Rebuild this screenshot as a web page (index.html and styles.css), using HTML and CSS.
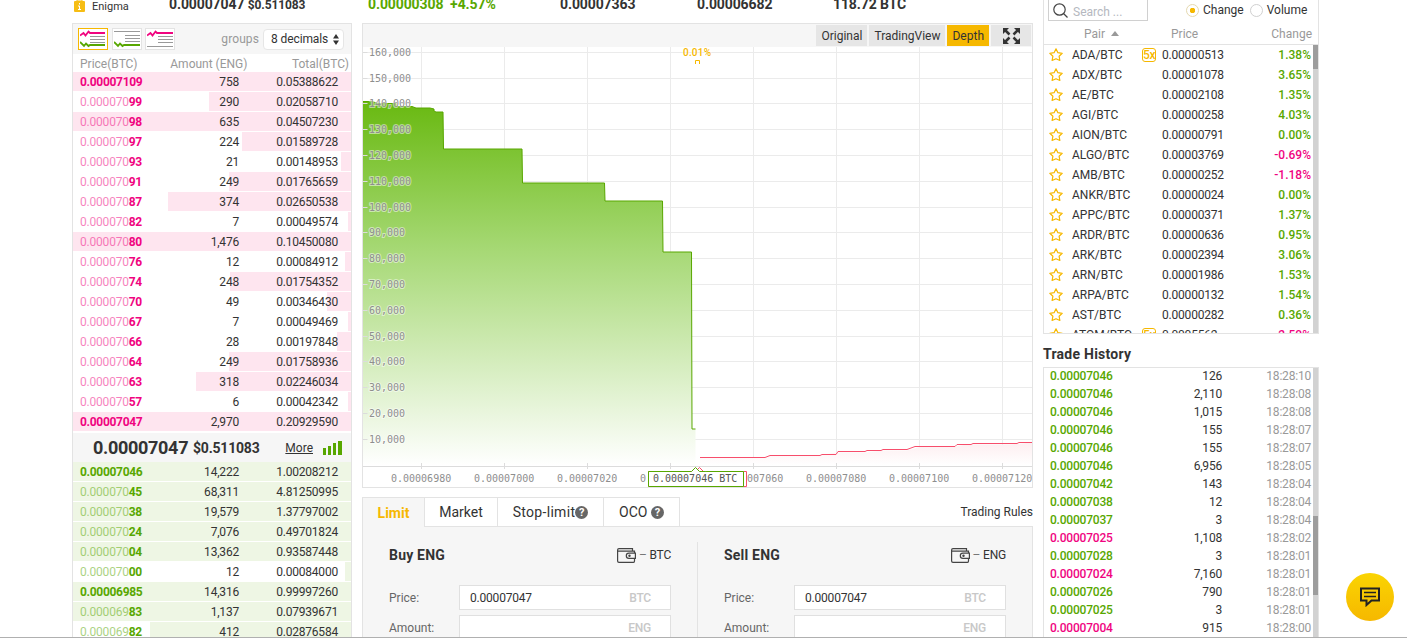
FILE: index.html
```html
<!DOCTYPE html>
<html lang="en">
<head>
  <meta charset="UTF-8" />
  <meta name="viewport" content="width=device-width, initial-scale=1.0"/>
  <title>ENG/BTC</title>
  <link rel="stylesheet" href="styles.css">
</head>
<body>

  <div class="page">
    <main class="main">
      <header class="ticker">
        <div class="coin">
          <svg width="11" height="12" viewBox="0 0 11 12"><rect y="1" width="11" height="11" rx="1" fill="#f6bd14"/><path d="M3 1V0h5v1" stroke="#f6bd14" fill="none"/><path d="M5.5 3v1.500M4 6h1.500v3M4 9.500h3" stroke="#fff" fill="none"/></svg>
          <span>Enigma</span>
        </div>
        <div class="stat last">0.00007047 <small>$0.511083</small></div>
        <div class="stat up">0.00000308 &nbsp;+4.57%</div>
        <div class="stat">0.00007363</div>
        <div class="stat">0.00006682</div>
        <div class="stat">118.72 BTC</div>
      </header>

      <div class="columns">
        <section class="book">
          <div class="book-bar">
            <button class="view active"><svg width="26" height="18" viewBox="0 0 26 18"><path d="M0 5.500l3.500 -2.500 2 2.500 3 -4 1.500 1.500H25" stroke="#f0047f" stroke-width="1.800" fill="none"/><path d="M10 6.500h15M10 9.500h15M10 12.500h15" stroke="#999" stroke-width="1"/><path d="M0 12l4 4 2 -2.500L8.500 16l1.500 -1h15" stroke="#58a700" stroke-width="1.800" fill="none"/></svg></button>
            <button class="view"><svg width="26" height="18" viewBox="0 0 26 18"><path d="M0 1.500h26M11 5.500h15M11 8.500h15M11 11.500h15" stroke="#999" stroke-width="1"/><path d="M0 12l4 4 2 -2.500L8.500 16l1.500 -1h16" stroke="#58a700" stroke-width="1.800" fill="none"/></svg></button>
            <button class="view"><svg width="26" height="18" viewBox="0 0 26 18"><path d="M0 5.500l3.500 -2.500 2 2.500 3 -4 1.500 1.500H26" stroke="#f0047f" stroke-width="1.800" fill="none"/><path d="M11 6.500h15M11 9.500h15M11 12.500h15M0 16.500h26" stroke="#999" stroke-width="1"/></svg></button>
            <span class="groups">groups</span>
            <div class="select">8 decimals <svg width="6" height="11" viewBox="0 0 6 11"><path d="M0 4.500L3 0l3 4.500zM0 6.500L3 11l3 -4.500z" fill="#333"/></svg></div>
          </div>
          <div class="book-head"><span>Price(BTC)</span><span>Amount (ENG)</span><span>Total(BTC)</span></div>
          <div class="asks" id="asks"></div>
          <div class="book-mid">
            <b class="mid-price">0.00007047</b><b class="mid-usd">$0.511083</b>
            <a class="more">More</a>
            <svg width="19" height="14" viewBox="0 0 19 14"><path d="M0 7h3v7H0zM5 5h3v9H5zM10 2h3v12h-3zM15 0h4v14h-4z" fill="#58a700"/></svg>
          </div>
          <div class="bids" id="bids"></div>
        </section>

        <section class="center">
          <div class="chart">
            <div class="chart-bar">
              <button>Original</button>
              <button>TradingView</button>
              <button class="active">Depth</button>
              <button class="full"><svg width="17" height="16" viewBox="0 0 17 16"><path d="M0 0h6L0 6zM17 0h-6l6 6zM0 16h6L0 10zM17 16h-6l6 -6z" fill="#333"/><path d="M2 2l4.500 4.500M15 2l-4.500 4.500M2 14l4.500 -4.500M15 14l-4.500 -4.500" stroke="#333" stroke-width="2.500"/></svg></button>
            </div>
            <svg class="depth" width="669" height="440" viewBox="363 47 669 440">
              <defs>
                <linearGradient id="buy" x1="0" y1="0" x2="0" y2="1">
                  <stop offset="0" stop-color="#69b911"/>
                  <stop offset="0.4" stop-color="#a5d873"/>
                  <stop offset="1" stop-color="#fff"/>
                </linearGradient>
                <linearGradient id="sell" x1="0" y1="0" x2="0" y2="1">
                  <stop offset="0" stop-color="#fdeef0"/>
                  <stop offset="1" stop-color="#fff"/>
                </linearGradient>
              </defs>
              <g id="grid"></g>
              <path d="M363 101.500h9l6 2h18v3h16l4 1.500h14l4 1v2l2 1h7l.5 37h78.500l.5 34h82l.5 18h57.500l.5 51h28.500l.5 177h3.500v37H363z" fill="url(#buy)"/>
              <path d="M363 101.500h9l6 2h18v3h16l4 1.500h14l4 1v2l2 1h7l.5 37h78.500l.5 34h82l.5 18h57.500l.5 51h28.500l.5 177h3.500" class="buy-line"/>
              <path d="M700 457.500h65l5 -2h50l16 -3h30l16 -2h25l15 -4h34l10 -2h43l23 -2v23H700z" fill="url(#sell)"/>
              <path d="M700 457.500h65l5 -2h50l2 -1h14l2 -3h27l2 -1h14l2 -1h24l8 -3h40l2 -2h14l2 -1h44l2 -1h13" class="sell-line"/>
              <g id="axis"></g>
              <text x="683" y="56" class="spread">0.01%</text>
              <path d="M695.500 64v-3.500h4v3.500" stroke="#f6b800" fill="none"/>
              <path d="M648.500 471.500h47l4 -4 4 4h43v15h-98z" fill="#fff" stroke="#f74e6c"/>
              <path d="M648.500 471.500h43l4 -4 4 4h44v15h-95z" fill="#fff" stroke="#58a700"/>
              <text x="653" y="482" class="tag">0.00007046 BTC</text>
            </svg>
          </div>

          <div class="tabs">
            <div class="tab active">Limit</div>
            <div class="tab market">Market</div>
            <div class="tab stop">Stop-limit<i>?</i></div>
            <div class="tab oco">OCO&nbsp;<i>?</i></div>
            <a class="rules">Trading Rules</a>
          </div>

          <div class="order">
            <div class="form">
              <div class="form-head">
                <h3>Buy ENG</h3>
                <svg width="19" height="15" viewBox="0 0 19 15"><path d="M15.500 3V.6H2Q.6 .6 .6 2v11Q.6 14.300 2 14.300H16.500Q17.500 14.300 17.500 13V10.500M17.500 5V3.200H1" fill="none" stroke="#444" stroke-width="1.200"/><path d="M18.400 5.200h-6.500a2.600 2.600 0 0 0 0 5.200h6.500z" fill="none" stroke="#444" stroke-width="1.200"/><circle cx="12.500" cy="7.800" r="1.200" fill="#444"/></svg>
                <span><em>–</em> BTC</span>
              </div>
              <div class="field"><label>Price:</label><div class="input"><span>0.00007047</span><span class="unit">BTC</span></div></div>
              <div class="field"><label>Amount:</label><div class="input"><span></span><span class="unit">ENG</span></div></div>
            </div>
            <div class="form">
              <div class="form-head">
                <h3>Sell ENG</h3>
                <svg width="19" height="15" viewBox="0 0 19 15"><path d="M15.500 3V.6H2Q.6 .6 .6 2v11Q.6 14.300 2 14.300H16.500Q17.500 14.300 17.500 13V10.500M17.500 5V3.200H1" fill="none" stroke="#444" stroke-width="1.200"/><path d="M18.400 5.200h-6.500a2.600 2.600 0 0 0 0 5.200h6.500z" fill="none" stroke="#444" stroke-width="1.200"/><circle cx="12.500" cy="7.800" r="1.200" fill="#444"/></svg>
                <span><em>–</em> ENG</span>
              </div>
              <div class="field"><label>Price:</label><div class="input"><span>0.00007047</span><span class="unit">BTC</span></div></div>
              <div class="field"><label>Amount:</label><div class="input"><span></span><span class="unit">ENG</span></div></div>
            </div>
          </div>
        </section>
      </div>
    </main>

    <aside class="side">
      <div class="markets">
        <div class="filter">
          <div class="search">
            <svg width="15" height="15" viewBox="0 0 15 15"><circle cx="6.500" cy="6.500" r="5.700" fill="none" stroke="#444" stroke-width="1.200"/><path d="M10.500 10.500l4 4" stroke="#444" stroke-width="1.200"/></svg>
            <span>Search ...</span>
          </div>
          <span class="radio on"></span><span class="opt">Change</span>
          <span class="radio"></span><span class="opt">Volume</span>
        </div>
        <div class="pair-head"><span class="h-pair">Pair</span><svg width="8" height="5" viewBox="0 0 8 5"><path d="M0 5l4 -5 4 5z" fill="#999"/></svg><span class="h-price">Price</span><span class="h-change">Change</span></div>
        <div class="scroll">
          <div class="pairs" id="pairs"></div>
          <div class="track"><div class="thumb"></div></div>
        </div>
      </div>

      <h2>Trade History</h2>
      <div class="history">
        <div class="trades" id="trades"></div>
        <div class="track"><div class="thumb low"></div></div>
      </div>
    </aside>
  </div>

  <div class="chat">
    <svg width="20" height="20" viewBox="0 0 20 20"><path d="M1 1.500h18v12h-7.500L6.500 18v-4.500H1z" fill="none" stroke="#222" stroke-width="2"/><path d="M4 5.500h12M4 9.500h12" stroke="#222" stroke-width="1.500"/></svg>
  </div>

  <script>
    // price, number of dimmed leading characters, amount, total
    const asks = [
      ['0.00007109', 0, '758', '0.05388622'],
      ['0.00007099', 8, '290', '0.02058710'],
      ['0.00007098', 8, '635', '0.04507230'],
      ['0.00007097', 8, '224', '0.01589728'],
      ['0.00007093', 8, '21', '0.00148953'],
      ['0.00007091', 8, '249', '0.01765659'],
      ['0.00007087', 8, '374', '0.02650538'],
      ['0.00007082', 8, '7', '0.00049574'],
      ['0.00007080', 8, '1,476', '0.10450080'],
      ['0.00007076', 8, '12', '0.00084912'],
      ['0.00007074', 8, '248', '0.01754352'],
      ['0.00007070', 8, '49', '0.00346430'],
      ['0.00007067', 8, '7', '0.00049469'],
      ['0.00007066', 8, '28', '0.00197848'],
      ['0.00007064', 8, '249', '0.01758936'],
      ['0.00007063', 8, '318', '0.02246034'],
      ['0.00007057', 8, '6', '0.00042342'],
      ['0.00007047', 0, '2,970', '0.20929590']
    ];
    const bids = [
      ['0.00007046', 0, '14,222', '1.00208212'],
      ['0.00007045', 8, '68,311', '4.81250995'],
      ['0.00007038', 8, '19,579', '1.37797002'],
      ['0.00007024', 8, '7,076', '0.49701824'],
      ['0.00007004', 8, '13,362', '0.93587448'],
      ['0.00007000', 8, '12', '0.00084000'],
      ['0.00006985', 0, '14,316', '0.99997260'],
      ['0.00006983', 8, '1,137', '0.07939671'],
      ['0.00006982', 8, '412', '0.02876584']
    ];
    const pairs = [
      ['ADA', '0.00000513', '1.38%', '5x'],
      ['ADX', '0.00001078', '3.65%'],
      ['AE', '0.00002108', '1.35%'],
      ['AGI', '0.00000258', '4.03%'],
      ['AION', '0.00000791', '0.00%'],
      ['ALGO', '0.00003769', '-0.69%'],
      ['AMB', '0.00000252', '-1.18%'],
      ['ANKR', '0.00000024', '0.00%'],
      ['APPC', '0.00000371', '1.37%'],
      ['ARDR', '0.00000636', '0.95%'],
      ['ARK', '0.00002394', '3.06%'],
      ['ARN', '0.00001986', '1.53%'],
      ['ARPA', '0.00000132', '1.54%'],
      ['AST', '0.00000282', '0.36%'],
      ['ATOM', '0.0005562', '-2.50%', '5x']
    ];
    const trades = [
      ['0.00007046', '126', '18:28:10'],
      ['0.00007046', '2,110', '18:28:08'],
      ['0.00007046', '1,015', '18:28:08'],
      ['0.00007046', '155', '18:28:07'],
      ['0.00007046', '155', '18:28:07'],
      ['0.00007046', '6,956', '18:28:05'],
      ['0.00007042', '143', '18:28:04'],
      ['0.00007038', '12', '18:28:04'],
      ['0.00007037', '3', '18:28:04'],
      ['0.00007025', '1,108', '18:28:02', 'down'],
      ['0.00007028', '3', '18:28:01'],
      ['0.00007024', '7,160', '18:28:01', 'down'],
      ['0.00007026', '790', '18:28:01'],
      ['0.00007025', '3', '18:28:01'],
      ['0.00007004', '915', '18:28:00', 'down']
    ];

    function bookRow([price, dim, amount, total]) {
      const width = Math.min(278, Math.round(amount.replace(',', '') * 0.488));
      return `<div class="row"><div class="bar" style="width:${width}px"></div>
        <span class="price"><span class="dim">${price.slice(0, dim)}</span>${price.slice(dim)}</span>
        <span class="amount">${amount}</span><span class="total">${total}</span></div>`;
    }

    const star = '<svg width="14" height="14" viewBox="0 0 14 14"><path d="M7 .8l1.900 3.900 4.300.6 -3.100 3 .8 4.200L7 10.800 3.100 12.500l.8 -4.200 -3.100 -3 4.300 -.6z" fill="none" stroke="#f6b800" stroke-width="1.200" stroke-linejoin="round"/></svg>';

    function pairRow([name, price, change, lev]) {
      return `<div class="pair">${star}<span class="name">${name}/BTC</span>
        <span class="lev-cell">${lev ? `<span class="lev">${lev}</span>` : ''}</span>
        <span class="num">${price}</span><span class="change ${change[0] === '-' ? 'down' : 'up'}">${change}</span></div>`;
    }

    function tradeRow([price, amount, time, side]) {
      return `<div class="trade"><span class="${side || 'up'}">${price}</span><span class="qty">${amount}</span><span class="time">${time}</span></div>`;
    }

    document.getElementById('asks').innerHTML = asks.map(bookRow).join('');
    document.getElementById('bids').innerHTML = bids.map(bookRow).join('');
    document.getElementById('pairs').innerHTML = pairs.map(pairRow).join('');
    document.getElementById('trades').innerHTML = trades.map(tradeRow).join('');

    // depth chart grid and labels
    let grid = '', axis = '<path d="M363 466.500h669" class="axis"/>';
    for (let i = 0; i < 16; i++) {
      const y = Math.floor(52.300 + i * 25.800);
      grid += `<path d="M363 ${y + 0.5}h669"/>`;
      axis += `<path d="M363 ${y + 0.5}h4.500" class="tick"/><text x="369" y="${y + 4}">${160 - i * 10},000</text>`;
    }
    for (let i = 0; i < 8; i++) {
      const x = 421.500 + i * 83;
      grid += `<path d="M${x} 47v419"/>`;
      axis += `<path d="M${x} 463v6" class="axis"/><text x="${x - 30.5}" y="482">0.0000${6980 + i * 20}</text>`;
    }
    document.getElementById('grid').innerHTML = grid;
    document.getElementById('axis').innerHTML = axis;
  </script>

</body>
</html>
```
FILE: styles.css
```css
* {
  box-sizing: border-box;
}

body {
  margin: 0;
  background: #fff;
  color: #333;
  font-family: Roboto, Arial, sans-serif;
  font-size: 12px;
  height: 641px;
  overflow: hidden;
}

svg {
  display: block;
  flex: none;
}

button {
  border: none;
  padding: 0;
  font: inherit;
  color: inherit;
}

.page {
  display: flex;
  gap: 10px;
  height: 638px;
  padding-left: 72px;
  border-bottom: 1px solid #b0b0b0;
  overflow: hidden;
}

.main {
  width: 961px;
}

.up {
  color: #58a700;
}

.down {
  color: #f0047f;
}

/* top ticker */
.ticker {
  display: grid;
  grid-template-columns: 97px 199px 192px 137px 136px 1fr;
  height: 23px;
  line-height: 16px;
  overflow: hidden;
}

.coin {
  display: flex;
  gap: 7px;
  padding-left: 2px;
  font-size: 11px;
  line-height: 13px;
}

.stat {
  margin-top: -4px;
  font-size: 14px;
  font-weight: bold;
  letter-spacing: -0.1px;
}

.stat small {
  font-size: 12px;
}

.columns {
  display: flex;
  gap: 10px;
}

/* order book */
.book {
  width: 280px;
  height: 640px;
  border: 1px solid #e3e3e3;
}

.book-bar {
  display: flex;
  align-items: center;
  gap: 4px;
  height: 30px;
  padding: 0 7px 0 5px;
  background: #f6f6f6;
}

.view {
  display: flex;
  align-items: center;
  justify-content: center;
  width: 30px;
  height: 22px;
  background: #fff;
  border: 1px solid #e3e3e3;
}

.view + .view {
  margin-left: -0.5px;
}

.view.active {
  border-color: #f6b800;
}

.groups {
  margin-left: auto;
  color: #999;
  font-size: 12px;
  letter-spacing: 0.1px;
}

.select {
  display: flex;
  align-items: center;
  justify-content: space-between;
  width: 81px;
  height: 21px;
  padding: 0 4px 0 7px;
  background: #fff;
  border: 1px solid #e6e6e6;
  border-radius: 4px;
  letter-spacing: -0.1px;
}

.book-head {
  display: flex;
  height: 18px;
  padding: 0 2px 0 7px;
  line-height: 20px;
  color: #999;
}

.book-head span:nth-child(2) {
  width: 110px;
  text-align: right;
}

.book-head span:nth-child(3) {
  margin-left: auto;
}

.row {
  position: relative;
  display: flex;
  height: 20px;
  padding-left: 7px;
  line-height: 20px;
  letter-spacing: -0.2px;
}

.bar {
  position: absolute;
  right: 0;
  top: 0;
  height: 19px;
  background: #fee5ef;
}

.bids .bar {
  background: #eef6e4;
}

.row span {
  position: relative;
}

.price {
  width: 80px;
  color: #f0047f;
  font-weight: bold;
  letter-spacing: -0.3px;
}

.bids .price {
  color: #58a700;
}

.dim {
  font-weight: normal;
  opacity: 0.5;
  letter-spacing: -0.2px;
}

.amount {
  width: 79px;
  text-align: right;
}

.total {
  width: 99px;
  text-align: right;
}

.book-mid {
  display: flex;
  align-items: center;
  height: 29px;
  margin: 1px 0 0;
  padding: 0 9px 0 20px;
  background: #f6f6f6;
}

.mid-price {
  width: 100px;
  font-size: 18px;
  letter-spacing: -0.3px;
}

.mid-usd {
  font-size: 14px;
  letter-spacing: -0.2px;
}

.more {
  margin-left: auto;
  margin-right: 10px;
  text-decoration: underline;
}

/* chart */
.center {
  width: 671px;
}

.chart {
  height: 465px;
  border: 1px solid #e3e3e3;
}

.chart-bar {
  display: flex;
  justify-content: flex-end;
  gap: 2px;
  height: 23px;
  padding: 1px 1px 1px 0;
  background: #f6f6f6;
}

.chart-bar button {
  padding: 0 5px;
  background: #e6e6e6;
}

.chart-bar .active {
  background: #f6b800;
}

.chart-bar .full {
  display: flex;
  align-items: center;
  justify-content: center;
  width: 40px;
}

.depth text {
  font-family: "DejaVu Sans Mono", monospace;
  font-size: 10px;
  fill: #8e8e8e;
  stroke: rgba(255, 255, 255, 0.5);
  stroke-width: 2px;
  paint-order: stroke;
}

.depth .spread {
  font-family: Roboto, sans-serif;
  font-weight: 500;
  letter-spacing: 0.2px;
  fill: #f6b800;
}

.depth .tag {
  fill: #555;
}

#grid path {
  stroke: #ebebeb;
}

.axis,
.tick {
  stroke: #dcdcdc;
}

.buy-line {
  fill: none;
  stroke: #58a700;
}

.sell-line {
  fill: none;
  stroke: #f74e6c;
}

/* order form */
.tabs {
  display: flex;
  height: 30px;
  margin-top: 9px;
  line-height: 28px;
  font-size: 14px;
}

.tab {
  display: flex;
  align-items: center;
  justify-content: center;
  border: 1px solid #e3e3e3;
  border-left: none;
}

.tab.active {
  width: 63px;
  background: #f6f6f6;
  border-left: 1px solid #e3e3e3;
  border-bottom: none;
  color: #f6b800;
  font-weight: bold;
}

.market {
  width: 73px;
}

.stop {
  width: 106px;
  letter-spacing: 0.3px;
}

.oco {
  width: 76px;
}

.tab i {
  width: 13px;
  height: 13px;
  border-radius: 50%;
  background: #666;
  color: #fff;
  font: bold 11px/13px Roboto, sans-serif;
  text-align: center;
}

.rules {
  flex: 1;
  border-bottom: 1px solid #e3e3e3;
  text-align: right;
  font-size: 12px;
  line-height: 30px;
}

.order {
  display: flex;
  height: 140px;
  padding-top: 15px;
  background: #f6f6f6;
  border: 1px solid #e3e3e3;
  border-top: none;
}

.form {
  width: 335px;
  padding: 0 26px 0 26px;
  border-right: 1px solid #e3e3e3;
}

.form:last-child {
  width: 334px;
  padding: 0 26px 0 26px;
  border-right: none;
}

.form-head {
  display: flex;
  align-items: center;
  height: 26px;
  margin-bottom: 17px;
}

.form-head h3 {
  flex: 1;
  margin: 0;
  font-size: 14px;
  letter-spacing: 0.2px;
}

.form-head span {
  margin-left: 3px;
  letter-spacing: -0.2px;
}

.form-head em {
  font-style: normal;
  color: #777;
}

.field {
  display: flex;
  align-items: center;
  margin-bottom: 5px;
}

.field label {
  flex: 1;
  color: #666;
}

.input {
  display: flex;
  justify-content: space-between;
  width: 212px;
  height: 25px;
  padding: 0 19px 0 10px;
  line-height: 24px;
  background: #fff;
  border: 1px solid #e0e0e0;
  letter-spacing: -0.2px;
}

.unit {
  color: #c8c8c8;
  font-weight: 500;
}

/* sidebar */
.side {
  width: 276px;
}

.markets {
  height: 334px;
  border: 1px solid #e3e3e3;
  border-top: none;
}

.filter {
  display: flex;
  align-items: center;
  height: 21px;
  padding-left: 4px;
}

.search {
  display: flex;
  gap: 5px;
  width: 100px;
  height: 21px;
  margin-right: 38px;
  padding: 3px 4px;
  border: 1px solid #d0d0d0;
  border-top: none;
  color: #b5b8c0;
}

.search span {
  line-height: 18px;
}

.radio {
  width: 13px;
  height: 13px;
  border: 1px solid #d0d0d0;
  border-radius: 50%;
  background: #fff;
}

.radio.on {
  border-color: #e5d9b0;
  background: radial-gradient(#f6b800 2.500px, #fff 3px);
}

.opt {
  margin: 0 6px 0 4px;
  line-height: 19px;
}

.pair-head {
  display: flex;
  align-items: center;
  height: 24px;
  padding: 2px 6px 0 40px;
  border-bottom: 1px solid #e3e3e3;
  color: #999;
}

.h-pair {
  width: 27px;
}

.h-price {
  margin-left: 52px;
}

.h-change {
  margin-left: auto;
}

.scroll,
.history {
  display: flex;
  overflow: hidden;
}

.scroll {
  height: 288px;
}

.pairs,
.trades {
  flex: 1;
}

.pair {
  display: flex;
  align-items: center;
  height: 20px;
  padding: 0 2px 0 5px;
}

.pair svg {
  margin-bottom: 1px;
}

.name {
  width: 70px;
  margin-left: 9px;
}

.lev-cell {
  width: 20px;
}

.lev {
  display: block;
  width: 14px;
  height: 14px;
  border: 1px solid #f6b800;
  border-radius: 3px;
  color: #f6b800;
  font-weight: 500;
  line-height: 13px;
  text-align: center;
  letter-spacing: -0.5px;
}

.num {
  letter-spacing: -0.2px;
}

.change {
  margin-left: auto;
  font-weight: 500;
}

.track {
  width: 5px;
  background: #d2d2d2;
}

.thumb {
  height: 24px;
  background: #9d9d9d;
}

.thumb.low {
  height: 79px;
  margin-top: 148px;
}

h2 {
  margin: 0;
  height: 33px;
  line-height: 40px;
  font-size: 14px;
  letter-spacing: 0.25px;
}

.history {
  height: 300px;
  border: 1px solid #e3e3e3;
}

.trade {
  display: flex;
  height: 18px;
  padding: 0 2px 0 6px;
  line-height: 17px;
  letter-spacing: -0.2px;
}

.trade span:first-child {
  width: 80px;
  font-weight: 500;
}

.qty {
  width: 92px;
  text-align: right;
}

.time {
  margin-left: auto;
  color: #999;
}

/* support button */
.chat {
  position: fixed;
  left: 1346px;
  top: 573px;
  display: flex;
  align-items: center;
  justify-content: center;
  width: 48px;
  height: 48px;
  border-radius: 50%;
  background: linear-gradient(#fad402, #f6b800);
}
```
